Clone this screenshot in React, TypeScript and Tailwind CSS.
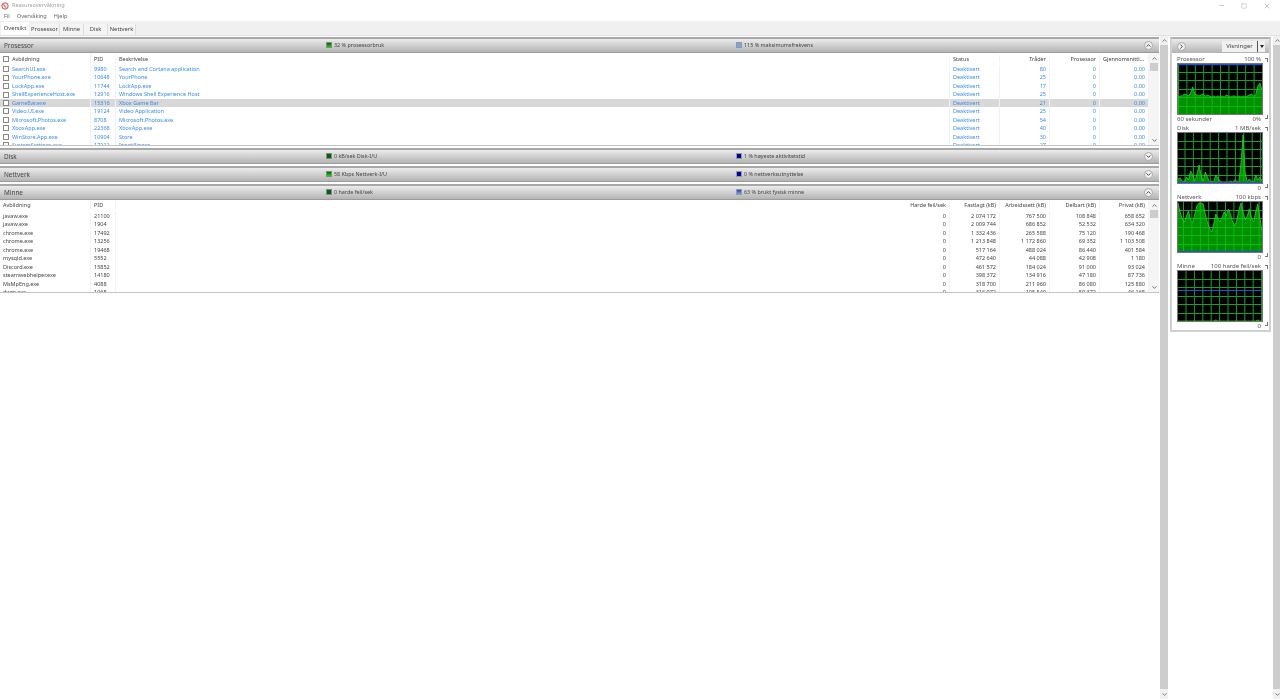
import { ChevronUp, ChevronDown, ChevronRight, Minus, Square, X } from 'lucide-react'

const cpuRows = [
  ['SearchUI.exe', '9980', 'Search and Cortana application', 'Deaktivert', '80', '0', '0.00'],
  ['YourPhone.exe', '10648', 'YourPhone', 'Deaktivert', '25', '0', '0.00'],
  ['LockApp.exe', '11744', 'LockApp.exe', 'Deaktivert', '17', '0', '0.00'],
  ['ShellExperienceHost.exe', '12916', 'Windows Shell Experience Host', 'Deaktivert', '25', '0', '0.00'],
  ['GameBar.exe', '15316', 'Xbox Game Bar', 'Deaktivert', '21', '0', '0.00'],
  ['Video.UI.exe', '19124', 'Video Application', 'Deaktivert', '25', '0', '0.00'],
  ['Microsoft.Photos.exe', '8708', 'Microsoft.Photos.exe', 'Deaktivert', '54', '0', '0.00'],
  ['XboxApp.exe', '22368', 'XboxApp.exe', 'Deaktivert', '40', '0', '0.00'],
  ['WinStore.App.exe', '10904', 'Store', 'Deaktivert', '30', '0', '0.00'],
  ['SystemSettings.exe', '17212', 'Innstillinger', 'Deaktivert', '27', '0', '0.00'],
]

const memRows = [
  ['javaw.exe', '21100', '0', '2 074 172', '767 500', '108 848', '658 652'],
  ['javaw.exe', '1904', '0', '2 009 744', '686 852', '52 532', '634 320'],
  ['chrome.exe', '17492', '0', '1 332 436', '265 588', '75 120', '190 468'],
  ['chrome.exe', '13256', '0', '1 213 848', '1 172 860', '69 352', '1 103 508'],
  ['chrome.exe', '19468', '0', '517 164', '488 024', '86 440', '401 584'],
  ['mysqld.exe', '5552', '0', '472 640', '44 088', '42 908', '1 180'],
  ['Discord.exe', '15852', '0', '461 572', '184 024', '91 000', '93 024'],
  ['steamwebhelper.exe', '14180', '0', '398 372', '134 916', '47 180', '87 736'],
  ['MsMpEng.exe', '4088', '0', '318 700', '211 960', '86 080', '125 880'],
  ['dwm.exe', '1068', '0', '316 972', '105 540', '59 372', '46 168'],
]

const cpuLine = [33,32,32,30,31,32,29,23,30,31,32,31,30,32,31,32,33,32,33,32,33,32,33,31,32,33,32,32,33,32,33,32,33,32,31,30,32,31,22,19,26]
const diskLine = [46,45,48,49,44,47,38,42,48,42,32,42,48,39,44,49,48,49,42,45,48,49,49,49,49,48,49,47,48,49,30,2,40,49,46,48,49,42,47,44,48]
const netLine = [1,10,17,20,14,9,18,20,12,4,1,1,2,12,20,26,30,22,12,16,20,15,10,14,7,12,20,24,18,8,1,10,18,14,7,16,20,10,2,16,29]
const memLine = [50,50,50,50,50,50,50,50,50,50,50,50,50,50,50,50,50,50,49,50,50,50,50,50,50,50,50,50,50,50,50,50,50,50,50,50,50,50,49,50,50]

function Graph({ line, blueAt, offset }: { line: number[]; blueAt: number; offset: number }) {
  const pts = line.map((y, i) => `${(i * 84) / (line.length - 1)},${y}`).join(' ')
  const cols = [0, 1, 2, 3, 4, 5, 6, 7, 8, 9].map(k => offset + k * 8.4)
  const rows = [8.5, 16.5, 25.5, 33.5, 42.5]
  return (
    <svg viewBox="0 0 84 50" className="block w-[84px] h-[50px] border border-[#777] box-content bg-black">
      {cols.map(x => <line key={x} x1={x} x2={x} y1={0} y2={50} stroke="#14a030" strokeWidth="1" />)}
      {rows.map(y => <line key={y} x1={0} x2={84} y1={y} y2={y} stroke="#14a030" strokeWidth="1" />)}
      <polygon points={`0,50 ${pts} 84,50`} fill="#00c800" fillOpacity="0.72" />
      <polyline points={pts} fill="none" stroke="#16e016" strokeWidth="0.8" />
      <line x1={0} x2={84} y1={blueAt} y2={blueAt} stroke="#2a4fd0" strokeWidth="1.2" />
    </svg>
  )
}

function GraphBlock({ title, max, line, blueAt, offset, low, high }: { title: string; max: string; line: number[]; blueAt: number; offset: number; low: string; high: string }) {
  return (
    <div className="flex flex-col">
      <div className="relative flex justify-between items-center h-[9px] w-[84px] text-[6px] leading-none text-[#555]">
        <span>{title}</span>
        <span>{max}</span>
        <span className="absolute right-[-7px] top-[4px] w-[3px] h-[4px] border-t border-r border-[#777]" />
      </div>
      <Graph line={line} blueAt={blueAt} offset={offset} />
      <div className="relative flex justify-between items-center h-[8px] pb-[1px] w-[84px] text-[6px] leading-none text-[#555]">
        <span>{low}</span>
        <span>{high}</span>
        <span className="absolute right-[-7px] top-0 w-[3px] h-[4px] border-b border-r border-[#777]" />
      </div>
    </div>
  )
}

function RoundBtn({ up, right }: { up?: boolean; right?: boolean }) {
  const Icon = right ? ChevronRight : up ? ChevronUp : ChevronDown
  return (
    <span className="w-[9px] h-[9px] rounded-full bg-[#f2f2f2] border border-[#a8a8a8] flex items-center justify-center text-[#333]">
      <Icon size={7} strokeWidth={3} />
    </span>
  )
}

function SectionHeader({ title, color1, text1, color2, text2, up }: { title: string; color1: string; text1: string; color2: string; text2: string; up?: boolean }) {
  return (
    <div className="h-[16px] shrink-0 border-t-2 border-[#a8a8a8] bg-gradient-to-b from-[#ececec] to-[#b4b4b4] border-b border-b-[#9c9c9c] flex items-center text-[#444]">
      <span className="w-[326px] pl-[4px] text-[6.4px]">{title}</span>
      <span className="w-[410px] flex items-center gap-[2px] text-[5.4px]">
        <span className={`w-[6px] h-[6px] border border-[#888] ${color1}`} />
        {text1}
      </span>
      <span className="flex-1 flex items-center gap-[2px] text-[5.4px]">
        <span className={`w-[6px] h-[6px] border border-[#999] ${color2}`} />
        {text2}
      </span>
      <span className="mr-[6px]"><RoundBtn up={up} /></span>
    </div>
  )
}

function InnerScroll() {
  return (
    <div className="w-[10px] shrink-0 bg-[#f5f5f5] flex flex-col items-center text-[#444]">
      <ChevronUp size={7} strokeWidth={2.5} className="mt-[2px]" />
      <div className="w-[8px] h-[8px] bg-[#cdcdcd] mt-[1px]" />
      <div className="flex-1" />
      <ChevronDown size={7} strokeWidth={2.5} className="mb-[1px]" />
    </div>
  )
}

function OuterScroll({ className }: { className: string }) {
  return (
    <div className={`shrink-0 bg-[#f0f0f0] flex flex-col items-center text-[#555] ${className}`}>
      <span className="h-[9px] shrink-0 flex items-center"><ChevronUp size={7} strokeWidth={2.5} /></span>
      <div className="w-full flex-1 bg-[#cdcdcd]" />
      <span className="h-[10px] shrink-0 flex items-center"><ChevronDown size={7} strokeWidth={2.5} /></span>
    </div>
  )
}

const columns = 'grid grid-cols-[91px_25px_834px_50px_50px_50px_49px] items-center'
const cell = 'border-r border-[#eef3f8] px-[3px] truncate'
const cellR = 'border-r border-[#eef3f8] px-[3px] text-right truncate'

function CpuTable() {
  return (
    <div className="h-[93px] shrink-0 flex overflow-hidden border-b border-[#c4c4c4]">
      <div className="flex-1 min-w-0">
        <div className={`h-[12px] ${columns} text-[5.5px] text-[#444]`}>
          <span className="flex items-center gap-[2px] pl-[3px] h-full border-r border-[#eef3f8]">
            <span className="w-[6px] h-[6px] border border-[#888] bg-white" /><span className="pl-[1px]">Avbildning</span>
          </span>
          <span className={cell}>PID</span>
          <span className={cell}>Beskrivelse</span>
          <span className={cell}>Status</span>
          <span className={cellR}>Tråder</span>
          <span className={cellR}>Prosessor</span>
          <span className={cellR}>Gjennomsnittli...</span>
        </div>
        {cpuRows.map(r => (
          <div key={r[1]} className={`h-[8.45px] ${columns} text-[5.5px] leading-[8.45px] text-[#3a8ee6] ${r[0] === 'GameBar.exe' ? 'bg-[#d8d8d8]' : ''}`}>
            <span className="flex items-center gap-[2px] pl-[3px] h-full border-r border-[#eef3f8]">
              <span className="w-[6px] h-[6px] shrink-0 border border-[#888] bg-white" /><span className="pl-[1px] truncate">{r[0]}</span>
            </span>
            <span className={cell}>{r[1]}</span>
            <span className={cell}>{r[2]}</span>
            <span className={cell}>{r[3]}</span>
            <span className={cellR}>{r[4]}</span>
            <span className={cellR}>{r[5]}</span>
            <span className={cellR}>{r[6]}</span>
          </div>
        ))}
      </div>
      <InnerScroll />
    </div>
  )
}

function MemTable() {
  return (
    <div className="h-[93px] shrink-0 flex overflow-hidden border-b border-[#c4c4c4]">
      <div className="flex-1 min-w-0">
        <div className={`h-[12px] pb-[2px] ${columns} text-[5.5px] text-[#444]`}>
          <span className={cell}>Avbildning</span>
          <span className={cell}>PID</span>
          <span className={cellR}>Harde feil/sek</span>
          <span className={cellR}>Fastlagt (kB)</span>
          <span className={cellR}>Arbeidssett (kB)</span>
          <span className={cellR}>Delbart (kB)</span>
          <span className={cellR}>Privat (kB)</span>
        </div>
        {memRows.map(r => (
          <div key={r[1]} className={`h-[8.45px] ${columns} text-[5.5px] leading-[8.45px] text-[#444]`}>
            {r.map((v, i) => <span key={i} className={i < 2 ? cell : cellR}>{v}</span>)}
          </div>
        ))}
      </div>
      <InnerScroll />
    </div>
  )
}

export default function App() {
  return (
    <div className="w-[1280px] h-[699px] overflow-hidden flex flex-col bg-white blur-[0.3px] font-['Noto_Sans',sans-serif]">
      <div className="h-[11px] shrink-0 flex items-center pl-[1px] text-[5.6px] text-[#a0a0a0]">
        <svg viewBox="0 0 10 10" className="w-[8px] h-[8px] mr-[3px]">
          <circle cx="5" cy="5" r="4" fill="#f4e6e6" stroke="#b33" strokeWidth="1" />
          <path d="M3 3 L6 7" stroke="#c33" strokeWidth="1.2" />
        </svg>
        <span>Ressursovervåkning</span>
        <div className="ml-auto flex items-center gap-[16px] pr-[9px] text-[#aaa]">
          <Minus size={7} />
          <Square size={6} />
          <X size={8} />
        </div>
      </div>
      <div className="h-[10px] shrink-0 flex items-center gap-[7px] pl-[4px] text-[5.6px] text-[#666]">
        <span>Fil</span><span>Overvåking</span><span>Hjelp</span>
      </div>
      <div className="h-[15px] shrink-0 bg-[#f0f0f0] border-b border-[#e2e2e2] flex items-end pl-[1px] text-[5.8px] text-[#444]">
        <span className="w-[28px] h-[13px] bg-white flex items-center justify-center">Oversikt</span>
        <span className="w-[30px] h-[11px] ml-[1px] bg-[#f4f4f4] border-r border-[#ddd] flex items-center justify-center">Prosessor</span>
        <span className="w-[24px] h-[11px] bg-[#f4f4f4] border-r border-[#ddd] flex items-center justify-center">Minne</span>
        <span className="w-[24px] h-[11px] bg-[#f4f4f4] border-r border-[#ddd] flex items-center justify-center">Disk</span>
        <span className="w-[28px] h-[11px] bg-[#f4f4f4] border-r border-[#ddd] flex items-center justify-center">Nettverk</span>
      </div>
      <div className="flex-1 min-h-0 flex">
        <div className="w-[1159px] shrink-0 flex flex-col pt-[1px]">
          <SectionHeader title="Prosessor" color1="bg-gradient-to-b from-[#006400] to-[#00e000]" text1="32 % prosessorbruk" color2="bg-[#6aa8f0]" text2="115 % maksimumsfrekvens" up />
          <CpuTable />
          <div className="h-[2px] shrink-0" />
          <SectionHeader title="Disk" color1="bg-[#006400]" text1="0 kB/sek Disk-I/U" color2="bg-[#0000a8]" text2="1 % høyeste aktivitetstid" />
          <div className="h-[2px] shrink-0" />
          <SectionHeader title="Nettverk" color1="bg-gradient-to-b from-[#006400] to-[#00ee00]" text1="58 Kbps Nettverk-I/U" color2="bg-[#0000a8]" text2="0 % nettverksutnyttelse" />
          <div className="h-[2px] shrink-0" />
          <SectionHeader title="Minne" color1="bg-[#006400]" text1="0 harde feil/sek" color2="bg-gradient-to-b from-[#2040c0] to-[#6aa8f0]" text2="63 % brukt fysisk minne" up />
          <MemTable />
        </div>
        <OuterScroll className="w-[8px] ml-[1px]" />
        <div className="w-[101px] ml-[2px] mr-[2px] mt-[1px] shrink-0 self-start h-[295px] border-2 border-[#d0d0d0] border-t-[#b0b0b0] flex flex-col">
          <div className="h-[14px] shrink-0 bg-gradient-to-b from-[#ececec] to-[#b4b4b4] flex items-center pl-[5px] pr-[4px] text-[6px] text-[#444]">
            <RoundBtn right />
            <span className="ml-auto w-[35px] h-[11px] bg-[#f0f0f0] flex items-center justify-center">Visninger</span>
            <span className="w-[8px] h-[11px] bg-[#f0f0f0] border-l border-[#555] flex items-center justify-center">
              <span className="w-0 h-0 border-l-[2.5px] border-r-[2.5px] border-t-[3px] border-l-transparent border-r-transparent border-t-[#222]" />
            </span>
          </div>
          <div className="pl-[5px] pt-[1px] flex flex-col">
            <GraphBlock title="Prosessor" max="100 %" line={cpuLine} blueAt={0.6} offset={0.5} low="60 sekunder" high="0%" />
            <GraphBlock title="Disk" max="1 MB/sek" line={diskLine} blueAt={49.4} offset={7} low="" high="0" />
            <GraphBlock title="Nettverk" max="100 kbps" line={netLine} blueAt={49.6} offset={5.5} low="" high="0" />
            <GraphBlock title="Minne" max="100 harde feil/sek" line={memLine} blueAt={19.5} offset={8} low="" high="0" />
          </div>
        </div>
        <OuterScroll className="w-[8px]" />
      </div>
    </div>
  )
}
